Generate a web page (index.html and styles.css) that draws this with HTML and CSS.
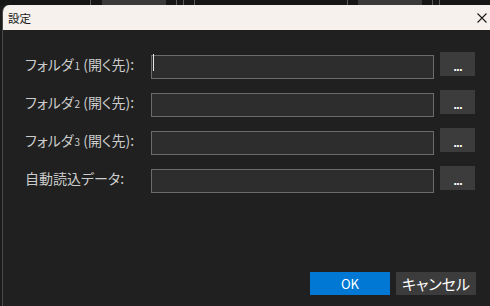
FILE: index.html
```html
<!DOCTYPE html>
<html lang="ja">
<head>
    <meta charset="UTF-8">
    <title>設定</title>
    <link rel="stylesheet" href="styles.css">
</head>
<body>
    <!-- window behind the dialog, only its bottom edge shows -->
    <div class="behind">
        <span class="line" style="margin-left: 90px"></span>
        <span class="block" style="margin-left: 11px; width: 64px"></span>
        <span class="line" style="margin-left: 10px"></span>
        <span class="line" style="margin-left: 6px"></span>
        <span class="line" style="margin-left: 10px"></span>
        <span class="line" style="margin-left: 152px"></span>
        <span class="block" style="margin-left: 10px; width: 64px"></span>
        <span class="line" style="margin-left: 10px"></span>
        <span class="line" style="margin-left: 6px"></span>
    </div>

    <div class="dialog">
        <div class="titlebar">
            <span class="title">設定</span>
            <svg class="close" width="10" height="10" viewBox="0 0 10 10">
                <path d="M0.5 0.5L9.5 9.5M9.5 0.5L0.5 9.5" stroke="#1a1a1a" stroke-width="1.1"/>
            </svg>
        </div>

        <div class="content">
            <div class="row">
                <label class="label">フォルダ<span class="num">1</span> (開く先):</label>
                <div class="field">
                    <input type="text" class="path">
                    <span class="caret"></span>
                </div>
                <button class="browse">...</button>
            </div>
            <div class="row">
                <label class="label">フォルダ<span class="num">2</span> (開く先):</label>
                <div class="field"><input type="text" class="path"></div>
                <button class="browse">...</button>
            </div>
            <div class="row">
                <label class="label">フォルダ<span class="num">3</span> (開く先):</label>
                <div class="field"><input type="text" class="path"></div>
                <button class="browse">...</button>
            </div>
            <div class="row">
                <label class="label">自動読込データ:</label>
                <div class="field"><input type="text" class="path"></div>
                <button class="browse">...</button>
            </div>

            <div class="actions">
                <button class="btn ok">OK</button>
                <button class="btn cancel">キャンセル</button>
            </div>
        </div>
    </div>
</body>
</html>
```

FILE: styles.css
```css
body {
    margin: 0;
    width: 490px;
    height: 306px;
    overflow: hidden;
    background-color: #1b1b1b;
    font-family: "Noto Sans CJK JP", "Noto Sans", sans-serif;
}

.behind {
    display: flex;
    height: 5px;
    background-color: #161616;
}

.behind .line {
    width: 1px;
    background-color: #5a5a5a;
}

.behind .block {
    background-color: #3a3a3a;
}

.dialog {
    margin-left: 2px;
    height: 301px;
    border-left: 1px solid #4a4a4a;
    border-top-left-radius: 7px;
    background-color: #202020;
    overflow: hidden;
}

.titlebar {
    display: flex;
    align-items: center;
    justify-content: space-between;
    height: 25px;
    padding: 0 3px 0 5px;
    background-color: #f6f1ed;
}

.title {
    font-size: 11.5px;
    color: #1a1a1a;
}

.close {
    margin-top: 1px;
}

.content {
    display: flex;
    flex-direction: column;
    padding: 22px 14px 0 22px;
}

.row {
    display: flex;
    align-items: center;
    height: 24px;
    margin-bottom: 14px;
}

.label {
    width: 126px;
    font-size: 14px;
    font-feature-settings: "palt";
    color: #cccccc;
    white-space: nowrap;
}

.label .num {
    font-size: 10px;
    margin-left: 1px;
}

.field {
    position: relative;
    width: 283px;
    height: 24px;
}

.path {
    box-sizing: border-box;
    width: 100%;
    height: 24px;
    margin: 0;
    border: 1px solid #6b6b6b;
    background-color: #2d2d2d;
    outline: none;
}

.caret {
    position: absolute;
    left: 2px;
    top: 2px;
    width: 1px;
    height: 17px;
    background-color: #e8e8e8;
}

.browse {
    width: 35px;
    height: 24px;
    margin-left: 6px;
    padding: 6px 0 0;
    border: none;
    background-color: #3c3c3c;
    color: #ffffff;
    font-family: "DejaVu Sans", sans-serif;
    font-size: 10px;
    font-weight: bold;
    letter-spacing: -1px;
}

.actions {
    display: flex;
    justify-content: flex-end;
    gap: 6px;
    margin-top: 68px;
}

.btn {
    width: 80px;
    height: 23px;
    padding: 0;
    border: none;
    color: #ffffff;
    font-family: "Noto Sans CJK JP", sans-serif;
    font-feature-settings: "palt";
}

.ok {
    background-color: #0078d4;
    font-size: 13px;
}

.cancel {
    background-color: #3c3c3c;
    font-size: 15px;
}
```
